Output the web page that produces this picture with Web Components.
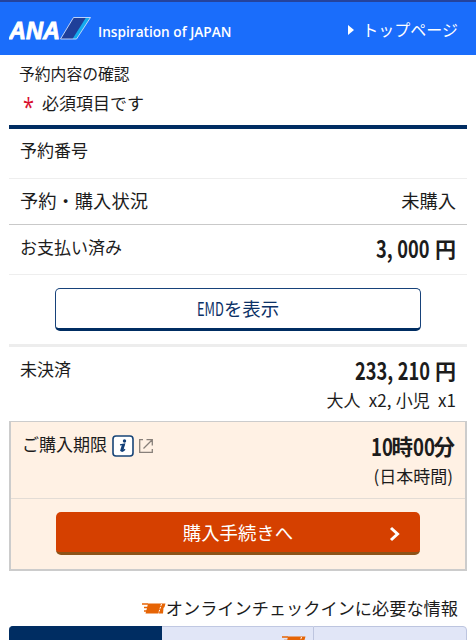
<!DOCTYPE html>
<html lang="ja">
<head>
<meta charset="utf-8">
<title>予約内容の確認</title>
<style>
    body {
        margin: 0;
        height: 640px;
        overflow: hidden;
        background: #fff;
        color: #1c1c1c;
        font-family: "Noto Sans CJK JP", sans-serif;
        font-size: 17px;
        font-weight: 400;
    }
    .intro { box-sizing: border-box; height: 70px; padding: 6px 19px 0; }
    .intro h1 { margin: 0; font-size: 15.8px; line-height: 25px; font-weight: 400; }
    .intro p { margin: 5px 0 0 4px; display: flex; gap: 9px; line-height: 24px; }
    .intro b { color: #d8102f; font: 400 25px/30px "Open Sans", sans-serif; width: 10px; height: 24px; transform: scaleX(.8); transform-origin: 0 0; }
    main { margin: 0 9px; border-top: 4px solid #002d62; }
</style>
</head>
<body>
<ana-header>トップページ</ana-header>
<div class="intro">
    <h1>予約内容の確認</h1>
    <p><b>*</b><span>必須項目です</span></p>
</div>
<main>
    <info-row style="height:50px;--pad:8px;--line:#eee">予約番号</info-row>
    <info-row style="height:46px;--pad:9px;--size:18.3px">予約・購入状況<span slot="value">未購入</span></info-row>
    <info-row style="height:50px;--pad:9px;--line:#eee">お支払い済み<price-text slot="value" head="3" tail="000" style="width:80px"></price-text></info-row>
    <action-button style="margin:13px 46px 0">EMDを表示</action-button>
    <info-row style="margin-top:13px;height:77px;--pad:9px;--line:transparent;border-top:3px solid #ededed">未決済<price-text slot="value" head="233" tail="210" style="width:101px"></price-text><span slot="note">大人&nbsp; x2, 小児&nbsp; x1</span></info-row>
    <deadline-box>ご購入期限</deadline-box>
    <checkin-title>オンラインチェックインに必要な情報</checkin-title>
    <tab-strip></tab-strip>
</main>

<script>
customElements.define('ana-header', class extends HTMLElement {
    constructor() {
        super();
        this.attachShadow({ mode: 'open' }).innerHTML = `
            <style>
                :host {
                    display: flex;
                    align-items: center;
                    box-sizing: border-box;
                    height: 55px;
                    padding: 4px 18px 0 9px;
                    border-top: 2px solid #24439d;
                    background: #1a6dfb;
                    color: #fff;
                }
                svg { display: block; flex: none; }
                .ana { font: italic 900 23px "Liberation Sans", sans-serif; }
                .tag { width: 134px; margin-left: 6px; font: 600 15.2px/24px "Open Sans", sans-serif; white-space: nowrap; }
                .tag span { display: inline-block; transform: scaleX(.88); transform-origin: 0 50%; }
                .top { margin-left: auto; font-size: 16px; line-height: 24px; display: flex; align-items: center; gap: 8px; }
                .top svg { margin-top: -2px; }
                .top span { margin-top: -3px; }
            </style>
            <svg width="83" height="30" viewBox="0 0 83 30" fill="#fff">
                <text class="ana" x="0" y="23" textLength="51" lengthAdjust="spacingAndGlyphs" stroke="#fff" stroke-width=".8">ANA</text>
                <path d="M64.500 1.500H81.500L67.500 23H51.500Z" fill="#1f3f99"/>
                <path d="M77 1.500H81.500L67.500 23H63.500Z" fill="#14abed"/>
                <path d="M64.500 1.500H81.500L67.500 23H51.500Z" fill="none" stroke="#cfe0ff" stroke-width=".9"/>
            </svg>
            <div class="tag"><span>Inspiration of JAPAN</span></div>
            <div class="top">
                <svg width="6" height="10"><path d="M0 0L6 5L0 10Z" fill="#fff"/></svg>
                <span><slot></slot></span>
            </div>
        `;
        // the tagline keeps one width whatever the font's own metrics are
        const tag = this.shadowRoot.querySelector('.tag span');
        requestAnimationFrame(() => {
            tag.style.transform = `scaleX(${133 / tag.offsetWidth})`;
        });
    }
});

customElements.define('info-row', class extends HTMLElement {
    constructor() {
        super();
        this.attachShadow({ mode: 'open' }).innerHTML = `
            <style>
                :host {
                    display: flex;
                    justify-content: space-between;
                    box-sizing: border-box;
                    padding: var(--pad) 11px 0 11px;
                    border-bottom: 1px solid var(--line, #c9c9c9);
                    font-size: var(--size, 17px);
                    line-height: 25px;
                }
                .side { text-align: right; }
                .note { font-size: 17px; line-height: 24px; margin-top: 3px; word-spacing: .4px; }
            </style>
            <div><slot></slot></div>
            <div class="side"><slot name="value"></slot><div class="note"><slot name="note"></slot></div></div>
        `;
    }
});

// amount in half-width digits, the comma takes a whole cell
customElements.define('price-text', class extends HTMLElement {
    connectedCallback() {
        this.attachShadow({ mode: 'open' }).innerHTML = `
            <style>
                :host { display: flex; justify-content: space-between; align-items: center; font-weight: 700; line-height: 29px; height: 29px; margin-left: auto; }
                .num { font-size: 23.5px; white-space: nowrap; transform: scaleX(.775); transform-origin: 0 50%; width: 0; }
                .comma { margin-right: 6px; }
                .yen { font-size: 21px; }
            </style>
            <span class="num">${this.getAttribute('head')}<span class="comma">,</span>${this.getAttribute('tail')}</span>
            <span class="yen">円</span>
        `;
    }
});

customElements.define('action-button', class extends HTMLElement {
    constructor() {
        super();
        this.attachShadow({ mode: 'open' }).innerHTML = `
            <style>
                :host {
                    display: flex;
                    justify-content: center;
                    align-items: center;
                    position: relative;
                    box-sizing: border-box;
                    height: 43px;
                    padding-bottom: 2px;
                    border: 1.500px solid #17427a;
                    border-bottom: 3px solid #002d62;
                    border-radius: 5px;
                    background: #fff;
                    color: #0b3166;
                    font-size: 18.4px;
                }
                :host([primary]) { background: #d54000; border: 0; border-bottom: 3px solid #8d5318; color: #fff; padding-bottom: 0; }
                svg { display: none; position: absolute; right: 20px; top: 14px; }
                :host([primary]) svg { display: block; }
                .latin { width: 27px; white-space: nowrap; }
                .latin span { display: inline-block; transform: scaleX(.7); transform-origin: 0 50%; }
            </style>
            <div class="latin" hidden><span></span></div><div class="label"></div>
            <svg width="11" height="16"><path d="M2 2L8.500 8L2 14" fill="none" stroke="#fff" stroke-width="3"/></svg>
        `;
    }
    connectedCallback() {
        // latin prefix is set half-width, the rest keeps its full width
        const [, latin, rest] = this.textContent.match(/^([A-Z]*)(.*)$/);
        this.shadowRoot.querySelector('.latin').hidden = !latin;
        this.shadowRoot.querySelector('.latin span').textContent = latin;
        this.shadowRoot.querySelector('.label').textContent = rest;
    }
});

customElements.define('deadline-box', class extends HTMLElement {
    constructor() {
        super();
        this.attachShadow({ mode: 'open' }).innerHTML = `
            <style>
                :host {
                    display: block;
                    box-sizing: border-box;
                    height: 150px;
                    border: 2px solid #ccc;
                    border-top-width: 1px;
                    background: #fff1e4;
                }
                .when { display: flex; justify-content: space-between; box-sizing: border-box; height: 77px; padding: 9px 10px 0 11px; border-bottom: 1px solid #e3dcd5; }
                .label { display: flex; gap: 5px; height: 27px; line-height: 25px; }
                .label svg { margin-top: 4px; }
                .side { text-align: right; line-height: 26px; }
                .time { display: flex; justify-content: flex-end; font-size: 21.5px; font-weight: 700; line-height: 30px; }
                .d { width: 20.500px; }
                .d i { display: inline-block; font-style: normal; font-size: 23.5px; transform: scaleX(.79); transform-origin: 0 50%; }
                .zone { margin: 1px 2px 0 0; font-size: 17px; }
                action-button { margin: 13px 45px 0; }
            </style>
            <div class="when">
                <div class="label"><slot></slot>
                    <svg width="22" height="22" viewBox="0 0 22 22"><rect x="1" y="1" width="20" height="20" rx="3" fill="#fff" stroke="#174477" stroke-width="1.600"/><circle cx="12.500" cy="6" r="1.700" fill="#123f78"/><path d="M8 9.800L12.500 9L10.300 16.200Q11.500 16 13 14.300" fill="none" stroke="#123f78" stroke-width="1.300"/><path d="M11.300 9.500L9.300 16.400" stroke="#123f78" stroke-width="2.600"/></svg>
                    <svg width="14" height="22" viewBox="0 0 14 22" fill="none" stroke="#88807a" stroke-width="1.300"><path d="M4 4.700H.7V17.300H13.300V14M7.500 4.700H13.300V10.500M13 5L4.500 13.500"/></svg>
                </div>
                <div class="side">
                    <div class="time"><div class="d"><i>10</i></div>時<div class="d"><i>00</i></div>分</div>
                    <div class="zone">(日本時間)</div>
                </div>
            </div>
            <action-button primary>購入手続きへ</action-button>
        `;
    }
});

customElements.define('ticket-icon', class extends HTMLElement {
    constructor() {
        super();
        this.attachShadow({ mode: 'open' }).innerHTML = `
            <style>
                :host { display: block; }
                svg { display: block; }
            </style>
            <svg width="24" height="12" viewBox="0 0 24 12">
                <path d="M6 .5H23.500L22.500 4L21.500 5L21 10.500H3.500L5 5Z" fill="#e66405"/>
                <path d="M0 1H6M2 4.500H6M2 8H5" stroke="#e66405" stroke-width="1.300"/>
                <path d="M19.500 1L16.500 10.500" stroke="#fff" stroke-dasharray="2 1"/>
            </svg>
        `;
    }
});

customElements.define('checkin-title', class extends HTMLElement {
    constructor() {
        super();
        this.attachShadow({ mode: 'open' }).innerHTML = `
            <style>
                :host { display: flex; justify-content: flex-end; align-items: center; height: 26px; margin-top: 24px; padding-right: 9px; font-size: 17.2px; line-height: 26px; }
                ticket-icon { margin-top: 2px; }
            </style>
            <ticket-icon></ticket-icon><slot></slot>
        `;
    }
});

customElements.define('tab-strip', class extends HTMLElement {
    constructor() {
        super();
        this.attachShadow({ mode: 'open' }).innerHTML = `
            <style>
                :host { display: grid; grid-template-columns: 153px 151px 1fr; height: 30px; margin-top: 5px; }
                div { box-sizing: border-box; border-top: 1px solid #c0c8e2; background: #e1e6f7; }
                .on { background: #002d62; border-color: #002d62; border-radius: 4px 0 0; }
                .mid { display: flex; justify-content: flex-end; padding: 9px 7px 0 0; }
                .last { border: 1px solid #bdc5df; border-radius: 0 4px 0 0; }
            </style>
            <div class="on"></div><div class="mid"><ticket-icon></ticket-icon></div><div class="last"></div>
        `;
    }
});
</script>
</body>
</html>
